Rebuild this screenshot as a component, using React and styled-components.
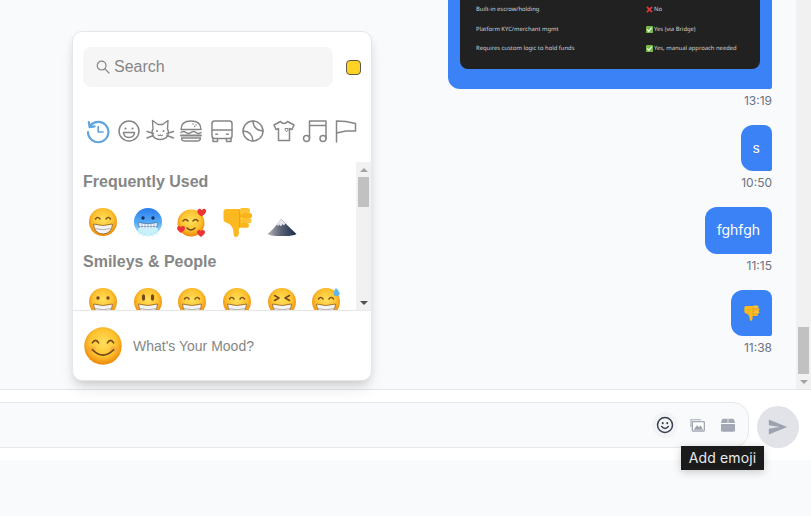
import React from "react";
import styled, { createGlobalStyle } from "styled-components";

const GlobalStyle = createGlobalStyle`
  html, body { margin: 0; padding: 0; height: 100%; }
  body {
    background: #f9fafb;
    font-family: Inter, "Liberation Sans", sans-serif;
    overflow: hidden;
  }
`;

const Page = styled.div`
  position: relative;
  width: 811px;
  height: 516px;
  overflow: hidden;
  display: flex;
  flex-direction: column;
`;

/* chat */
const ChatArea = styled.div`
  height: 389px;
  display: flex;
  flex-shrink: 0;
`;
const Messages = styled.div`
  flex: 1;
  min-width: 0;
  overflow: hidden;
  display: flex;
  flex-direction: column;
  justify-content: flex-end;
  align-items: flex-end;
  padding: 0 24px 33px 0;
`;
const Message = styled.div`
  display: flex;
  flex-direction: column;
  align-items: flex-end;
  flex-shrink: 0;
  margin-top: 16px;
`;
const Bubble = styled.div`
  background: #3b82f6;
  color: #fff;
  font-size: 14px;
  line-height: 22.75px;
  padding: 12px;
  border-radius: 12px 8px 2px 12px;
  display: flex;
  align-items: center;
  justify-content: center;
`;
const Time = styled.div`
  margin-top: 4px;
  font-size: 12px;
  line-height: 16px;
  color: #6b7280;
`;
const Shot = styled.div`
  width: 300px;
  background: #212121;
  border-radius: 0 0 8px 8px;
  padding: 0 16px 10px;
  margin-bottom: 8px;
  box-sizing: border-box;
  display: grid;
  grid-template-columns: 170px 1fr;
  grid-auto-rows: 19.6px;
  align-items: center;
  font-family: "Noto Sans", sans-serif;
  font-size: 5.85px;
  text-rendering: geometricPrecision;
  color: #d4d4d4;
  white-space: nowrap;
`;
const ShotValue = styled.span`
  display: flex;
  align-items: center;
  gap: 1px;
`;

const Scrollbar = styled.div`
  width: 15px;
  flex-shrink: 0;
  background: #f1f1f1;
  display: flex;
  flex-direction: column;
  align-items: center;
`;
const ArrowSlot = styled.div`
  height: 15px;
  flex-shrink: 0;
  display: flex;
  align-items: center;
  justify-content: center;
`;
const Arrow = styled.div`
  width: 0;
  height: 0;
  border-left: 4px solid transparent;
  border-right: 4px solid transparent;
  ${(p) => (p.$up ? "border-bottom" : "border-top")}: 4px solid ${(p) => p.$color};
`;
const Thumb = styled.div`
  width: 11px;
  height: ${(p) => p.$height}px;
  background: #c1c1c1;
  flex-shrink: 0;
`;
const Spacer = styled.div`
  flex: 1;
`;

/* composer */
const Composer = styled.div`
  height: 71px;
  flex-shrink: 0;
  box-sizing: border-box;
  background: #fff;
  border-top: 1px solid #e5e7eb;
  display: flex;
  align-items: center;
  gap: 8px;
  padding: 0 12px 0 0;
`;
const InputBox = styled.div`
  flex: 1;
  height: 46px;
  margin-left: -24px;
  box-sizing: border-box;
  background: #f9fafb;
  border: 1px solid #e5e7eb;
  border-radius: 16px;
  display: flex;
  align-items: center;
  justify-content: flex-end;
  gap: 5.5px;
  padding-right: 7px;
`;
const ToolButton = styled.div`
  width: 26px;
  height: 26px;
  border-radius: 50%;
  background: ${(p) => (p.$active ? "#f3f4f6" : "transparent")};
  display: flex;
  align-items: center;
  justify-content: center;
`;
const SendButton = styled.div`
  width: 42px;
  height: 42px;
  margin-top: 4px;
  border-radius: 50%;
  background: #e1e3e8;
  display: flex;
  align-items: center;
  justify-content: center;
`;
const Tooltip = styled.div`
  position: absolute;
  left: 681px;
  top: 446px;
  width: 83px;
  height: 24px;
  background: #1b1b1b;
  color: #e8eaee;
  font-size: 14px;
  letter-spacing: 0.15px;
  line-height: 24px;
  text-align: center;
  box-shadow: 0 2px 8px rgba(0, 0, 0, 0.2);
`;

/* emoji picker */
const Picker = styled.div`
  position: absolute;
  left: 72px;
  top: 31px;
  width: 300px;
  height: 350px;
  box-sizing: border-box;
  background: #fff;
  border: 1px solid #e7e7e7;
  border-radius: 10px;
  box-shadow: 0 10px 15px -3px rgba(0, 0, 0, 0.1), 0 4px 8px -2px rgba(0, 0, 0, 0.12);
  overflow: hidden;
  display: flex;
  flex-direction: column;
  font-family: "Liberation Sans", Arial, sans-serif;
`;
const SearchRow = styled.div`
  display: flex;
  align-items: center;
  padding: 15px 10px 0;
  gap: 13px;
`;
const SearchBox = styled.div`
  width: 250px;
  height: 40px;
  background: #f6f6f6;
  border-radius: 8px;
  display: flex;
  align-items: center;
  gap: 4px;
  padding-left: 13px;
  box-sizing: border-box;
  color: #868686;
  font-size: 16px;
`;
const SkinTone = styled.div`
  width: 15px;
  height: 15px;
  box-sizing: border-box;
  background: #ffd225;
  border: 1px solid #5f5a48;
  border-radius: 4px;
  margin-top: 1px;
`;
const Categories = styled.div`
  display: flex;
  padding: 32px 0 0 9.2px;
  height: 43px;
  flex-shrink: 0;
`;
const Category = styled.div`
  width: 31px;
  height: 24px;
  display: flex;
  align-items: center;
  justify-content: center;
  flex-shrink: 0;
`;
const PickerBody = styled.div`
  height: 148px;
  display: flex;
  flex-shrink: 0;
`;
const EmojiList = styled.div`
  flex: 1;
  min-width: 0;
  overflow: hidden;
  padding: 10px 0 0 8px;
`;
const SectionTitle = styled.div`
  font-size: 16px;
  font-weight: 700;
  line-height: 20px;
  color: #868686;
  padding-left: 2px;
`;
const EmojiRow = styled.div`
  display: flex;
  margin: 8px 0;
`;
const EmojiCell = styled.div`
  width: 44.6px;
  height: 44px;
  flex-shrink: 0;
  display: flex;
  align-items: center;
  justify-content: center;
`;
const PickerFooter = styled.div`
  flex: 1;
  border-top: 1px solid #e7e7e7;
  display: flex;
  align-items: center;
  gap: 10px;
  padding-left: 10px;
  font-size: 14px;
  color: #868686;
`;

const defs = (
  <svg width="0" height="0" style={{ position: "absolute" }}>
    <defs>
      <radialGradient id="faceFill" cx="50%" cy="42%" r="56%">
        <stop offset="0%" stopColor="#ffdf5c" />
        <stop offset="65%" stopColor="#fdc22f" />
        <stop offset="100%" stopColor="#ee8a0c" />
      </radialGradient>
      <linearGradient id="coldFill" x1="0" y1="0" x2="0" y2="1">
        <stop offset="0%" stopColor="#2a7bf0" />
        <stop offset="55%" stopColor="#57b0f5" />
        <stop offset="100%" stopColor="#c4f0fa" />
      </linearGradient>
      <linearGradient id="rockFill" x1="0" y1="0" x2="1" y2="0">
        <stop offset="0%" stopColor="#b5b6bb" />
        <stop offset="45%" stopColor="#5d6475" />
        <stop offset="100%" stopColor="#182947" />
      </linearGradient>
    </defs>
  </svg>
);

const Teeth = () => (
  <>
    <path d="M6.5 18Q16 21 25.5 18Q25 27.5 16 28Q7 27.5 6.5 18Z" fill="#f4f4f4" stroke="#8f6128" strokeWidth=".8" />
    <path d="M7.5 22.5Q16 25 24.5 22.5" fill="none" stroke="#a8a8a8" strokeWidth=".9" />
  </>
);
const ArcEyes = () => (
  <path d="M8.5 13Q10.7 9.8 13 13M19 13Q21.3 9.8 23.5 13" fill="none" stroke="#74481c" strokeWidth="1.4" strokeLinecap="round" />
);
const Head = () => <circle cx="16" cy="16" r="14" fill="url(#faceFill)" />;

const emojiArt = {
  beam: (
    <>
      <Head />
      <ArcEyes />
      <Teeth />
    </>
  ),
  cold: (
    <>
      <circle cx="16" cy="16" r="14" fill="url(#coldFill)" />
      <circle cx="11" cy="12" r="1.7" fill="#14305f" />
      <circle cx="21" cy="12" r="1.7" fill="#14305f" />
      <path d="M6.5 16.5Q16 19 25.5 16.5L24.5 24Q16 26.5 7.5 24Z" fill="#eef8fc" stroke="#47699a" strokeWidth=".7" />
      <path d="M10 17.5v7M13 18v7M16 18v7.5M19 18v7M22 17.5v7M7 20.5h18" fill="none" stroke="#6d8cb5" strokeWidth=".6" />
      <path d="M6 22l1 8 2-4 2 5 2-4 3 4 3-4 2 4 2-5 2 4 1-8Z" fill="#c9f1fb" />
    </>
  ),
  hearts: (
    <>
      <circle cx="15" cy="17" r="13.5" fill="url(#faceFill)" />
      <path d="M7 15Q9.5 12 12 15M17 15Q19.5 12 22 15" fill="none" stroke="#74481c" strokeWidth="1.4" strokeLinecap="round" />
      <path d="M11 22Q15 26 19 22" fill="none" stroke="#74481c" strokeWidth="1.4" strokeLinecap="round" />
      <path d="M25.5 10.5C21.5 8 20.5 5.5 22 3.5C23.5 2 25.2 3 25.8 4.2C26.5 3 28.2 2 29.7 3.5C31 5.5 29.5 8 25.5 10.5Z" fill="#ec3338" />
      <path d="M5 27C1.5 24.8 .3 22.5 1.5 20.8C2.9 19.4 4.3 20.2 5 21.3C5.7 20.2 7.2 19.4 8.6 20.8C9.8 22.5 8.4 24.8 5 27Z" fill="#ec3338" />
      <path d="M25 31C21.5 28.8 20.3 26.5 21.5 24.8C22.9 23.4 24.3 24.2 25 25.3C25.7 24.2 27.2 23.4 28.6 24.8C29.8 26.5 28.4 28.8 25 31Z" fill="#ec3338" />
    </>
  ),
  thumbsDown: (
    <>
      <path d="M2.5 6Q2.5 3 6 3H20V21L18 22.5Q17.5 25 18 27Q17.5 31 15 31Q12.5 31 12.5 27Q12.5 22 9.5 19Q7 17 4 16Q2.5 15.5 2.5 13Z" fill="#fbb81f" />
      <rect x="18.5" y="2" width="10.5" height="5.2" rx="2.5" fill="#fdc233" />
      <rect x="19.5" y="7" width="11.5" height="5.2" rx="2.5" fill="#f9b41c" />
      <rect x="19.5" y="12" width="11" height="5.2" rx="2.5" fill="#fdc233" />
      <rect x="18.5" y="17" width="9.5" height="4.8" rx="2.4" fill="#f9b41c" />
      <path d="M18.5 4V21" stroke="#df9310" strokeWidth=".5" fill="none" />
    </>
  ),
  mountain: (
    <>
      <path d="M1.5 28Q9 22 15 13Q23 21 30.5 28Q26 30.5 16 30Q6 30.5 1.5 28Z" fill="url(#rockFill)" />
      <path d="M11 18.5L15 13L19.5 17.5L18 19.5L16.6 18L15 20.5L13.5 18.5L12 20Z" fill="#e6e7ec" />
    </>
  ),
  grinning: (
    <>
      <Head />
      <circle cx="11" cy="12" r="1.7" fill="#74481c" />
      <circle cx="21" cy="12" r="1.7" fill="#74481c" />
      <Teeth />
    </>
  ),
  smiley: (
    <>
      <Head />
      <ellipse cx="11.5" cy="11.5" rx="1.6" ry="3.2" fill="#74481c" />
      <ellipse cx="20.5" cy="11.5" rx="1.6" ry="3.2" fill="#74481c" />
      <Teeth />
    </>
  ),
  squint: (
    <>
      <Head />
      <path d="M8.5 9.5L13 12L8.5 14.5M23.5 9.5L19 12L23.5 14.5" fill="none" stroke="#74481c" strokeWidth="1.5" strokeLinecap="round" strokeLinejoin="round" />
      <Teeth />
    </>
  ),
  sweat: (
    <>
      <Head />
      <ArcEyes />
      <Teeth />
      <path d="M26 2Q22.5 7 24.5 9.5Q27 11 29.5 9Q30.5 6.5 26 2Z" fill="#5cb6f2" />
    </>
  ),
  smiling: (
    <>
      <circle cx="16" cy="16" r="15" fill="url(#faceFill)" />
      <ellipse cx="7" cy="18.5" rx="3.4" ry="2.2" fill="#f6a43c" opacity=".6" />
      <ellipse cx="25" cy="18.5" rx="3.4" ry="2.2" fill="#f6a43c" opacity=".6" />
      <path d="M7.5 13.5Q10 9.5 12.5 13.5M19.5 13.5Q22 9.5 24.5 13.5" fill="none" stroke="#74481c" strokeWidth="1.3" strokeLinecap="round" />
      <path d="M7.5 19Q16 27.5 24.5 19" fill="none" stroke="#74481c" strokeWidth="1.4" strokeLinecap="round" />
    </>
  ),
};

const Emoji = ({ name, size = 32 }) => (
  <svg width={size} height={size} viewBox="0 0 32 32">
    {emojiArt[name]}
  </svg>
);

const stroke = { fill: "none", stroke: "#868686", strokeWidth: 1.5, strokeLinecap: "round", strokeLinejoin: "round" };

const categoryIcons = [
  <g key="recent" {...stroke} stroke="#5fa6e0" strokeWidth="2.2">
    <path d="M4.6 6.2A10.2 10.2 0 1 1 2 13" />
    <path d="M2.8 3.2L3.6 8.2L8.6 7.4" />
    <path d="M12.2 7.5V13H17" strokeWidth="1.7" />
  </g>,
  <g key="smile" {...stroke}>
    <circle cx="12" cy="12" r="10" />
    <circle cx="8.5" cy="9.5" r="1.1" fill="#868686" stroke="none" />
    <circle cx="15.5" cy="9.5" r="1.1" fill="#868686" stroke="none" />
    <path d="M6.5 13.5H17.5Q17 18.5 12 18.5Q7 18.5 6.5 13.5Z" />
  </g>,
  <g key="cat" {...stroke} strokeWidth="1.4">
    <path d="M5 10L4.5 1.5L10 5.5H14.5L20 1.5L19.5 10Q21.5 13 19.5 17Q17 20.5 12.2 20.5Q7.5 20.5 5 17Q3 13 5 10Z" />
    <path d="M-1 12.5L5.5 14.5M-1 19L5.5 16.5M25.5 12.5L19 14.5M25.5 19L19 16.5" />
    <circle cx="9" cy="12" r="1" fill="#868686" stroke="none" />
    <circle cx="15.5" cy="12" r="1" fill="#868686" stroke="none" />
    <path d="M10 16Q11 17.5 12.2 15.8Q13.5 17.5 14.5 16" strokeWidth="1.1" />
  </g>,
  <g key="burger" {...stroke} strokeWidth="1.4">
    <path d="M2 10.5Q2 2 12 2Q22 2 22 10.5Z" />
    <path d="M2 13.5Q4.5 11.5 7 13.5T12 13.5T17 13.5T22 13.5" />
    <path d="M2 16.5H22" strokeWidth="2" />
    <path d="M2.5 19H21.5Q21.5 22 18 22H6Q2.5 22 2.5 19Z" />
    <path d="M14 5h.1M17 6h.1M15.5 7.5h.1" />
  </g>,
  <g key="bus" {...stroke}>
    <rect x="2" y="2" width="20" height="17.5" rx="2.5" />
    <path d="M2 11H22M3 19.5V22.5H7.5V19.5M16.5 19.5V22.5H21V19.5M5.8 15.3H7.5M16.5 15.3H18.2" />
  </g>,
  <g key="ball" {...stroke}>
    <circle cx="12" cy="12" r="10" />
    <path d="M12 2Q12.5 11.5 22 12M2 12Q11.5 12.5 12 22" />
  </g>,
  <g key="shirt" {...stroke}>
    <path d="M8.5 2.5L2 6L4 10.5L6.5 9.5V21.5H17.5V9.5L20 10.5L22 6L15.5 2.5Q12 6.5 8.5 2.5Z" />
    <path d="M13.5 9.5H16V11.5L14.7 12.5L13.5 11.5Z" strokeWidth="1" />
  </g>,
  <g key="music" {...stroke}>
    <circle cx="3.5" cy="19.5" r="3" />
    <circle cx="20" cy="19.5" r="3" />
    <path d="M6.5 19.5V2H23V19.5M6.5 6.5H23" />
  </g>,
  <g key="flag" {...stroke}>
    <path d="M2.5 23V2L12 2.5L21.5 4.5V12L12 12L2.5 14" />
  </g>,
];

const CrossMark = () => (
  <svg width="7" height="7" viewBox="0 0 8 8">
    <path d="M1 1L7 7M7 1L1 7" stroke="#e0383a" strokeWidth="2" />
  </svg>
);
const CheckMark = () => (
  <svg width="7" height="7" viewBox="0 0 8 8">
    <rect width="8" height="8" rx="1" fill="#76b947" />
    <path d="M1.5 4L3.3 6L6.5 2" fill="none" stroke="#fff" strokeWidth="1.3" />
  </svg>
);

const frequent = ["beam", "cold", "hearts", "thumbsDown", "mountain"];
const smileys = ["grinning", "smiley", "beam", "beam", "squint", "sweat"];

const shotRows = [
  ["Built-in escrow/holding", <CrossMark />, "No"],
  ["Platform KYC/merchant mgmt", <CheckMark />, "Yes (via Bridge)"],
  ["Requires custom logic to hold funds", <CheckMark />, "Yes, manual approach needed"],
];

export default function App() {
  return (
    <Page>
      <GlobalStyle />
      {defs}
      <ChatArea>
        <Messages>
          <Message>
            <Bubble>
              <Shot>
                {shotRows.map(([label, mark, value]) => (
                  <React.Fragment key={label}>
                    <span>{label}</span>
                    <ShotValue>
                      {mark}
                      {value}
                    </ShotValue>
                  </React.Fragment>
                ))}
              </Shot>
            </Bubble>
            <Time>13:19</Time>
          </Message>
          <Message>
            <Bubble>s</Bubble>
            <Time>10:50</Time>
          </Message>
          <Message>
            <Bubble>fghfgh</Bubble>
            <Time>11:15</Time>
          </Message>
          <Message>
            <Bubble>
              <svg width="17" height="22" viewBox="0 0 32 32" style={{ display: "block" }}>
                {emojiArt.thumbsDown}
              </svg>
            </Bubble>
            <Time>11:38</Time>
          </Message>
        </Messages>
        <Scrollbar>
          <Spacer />
          <Thumb $height={47} />
          <ArrowSlot>
            <Arrow $color="#a3a3a3" />
          </ArrowSlot>
        </Scrollbar>
      </ChatArea>

      <Composer>
        <InputBox>
          <ToolButton $active>
            <svg width="18" height="18" viewBox="0 0 24 24" fill="none" stroke="#374151" strokeWidth="2" strokeLinecap="round">
              <circle cx="12" cy="12" r="10" />
              <path d="M7.5 14Q12 19 16.5 14" />
              <path d="M9 9.2v.6M15 9.2v.6" strokeWidth="2.6" />
            </svg>
          </ToolButton>
          <ToolButton>
            <svg width="16" height="16" viewBox="0 0 24 24">
              <path d="M2 3H18V5H4V15H2Z" fill="#b6bbc4" />
              <rect x="5" y="7" width="18" height="14" rx="1" fill="#fff" stroke="#a3a9b4" strokeWidth="2" />
              <path d="M7 19L12 12.5L15 15.5L17.5 12.5L21 19Z" fill="#9ca3af" />
            </svg>
          </ToolButton>
          <ToolButton>
            <svg width="16" height="16" viewBox="0 0 24 24" fill="#a3a9b4">
              <path d="M5 2.5H11.5V9H1.5L2.5 5Q3 2.5 5 2.5Z" />
              <path d="M12.5 2.5H19Q21 2.5 21.5 5L22.5 9H12.5Z" />
              <path d="M1.5 10.5H22.5V20Q22.5 22 20.5 22H3.5Q1.5 22 1.5 20Z" />
            </svg>
          </ToolButton>
        </InputBox>
        <SendButton>
          <svg width="20" height="20" viewBox="0 0 24 24" fill="#9ca3af">
            <path d="M1 3L23 12L1 21L1 14L14 12L1 10Z" />
          </svg>
        </SendButton>
      </Composer>

      <Tooltip>Add emoji</Tooltip>

      <Picker>
        <SearchRow>
          <SearchBox>
            <svg width="14" height="14" viewBox="0 0 14 14" fill="none" stroke="#868686" strokeWidth="1.2" strokeLinecap="round">
              <circle cx="5.6" cy="5.6" r="4.4" />
              <path d="M8.9 8.9L13 13" />
            </svg>
            Search
          </SearchBox>
          <SkinTone />
        </SearchRow>
        <Categories>
          {categoryIcons.map((icon) => (
            <Category key={icon.key}>
              <svg width="24" height="24" viewBox="0 0 24 24" style={{ overflow: "visible" }}>
                {icon}
              </svg>
            </Category>
          ))}
        </Categories>
        <PickerBody>
          <EmojiList>
            <SectionTitle>Frequently Used</SectionTitle>
            <EmojiRow>
              {frequent.map((name) => (
                <EmojiCell key={name}>
                  <Emoji name={name} />
                </EmojiCell>
              ))}
            </EmojiRow>
            <SectionTitle>Smileys &amp; People</SectionTitle>
            <EmojiRow>
              {smileys.map((name, i) => (
                <EmojiCell key={i}>
                  <Emoji name={name} />
                </EmojiCell>
              ))}
            </EmojiRow>
          </EmojiList>
          <Scrollbar>
            <ArrowSlot>
              <Arrow $up $color="#a3a3a3" />
            </ArrowSlot>
            <Thumb $height={30} />
            <Spacer />
            <ArrowSlot>
              <Arrow $color="#505050" />
            </ArrowSlot>
          </Scrollbar>
        </PickerBody>
        <PickerFooter>
          <Emoji name="smiling" size={40} />
          What's Your Mood?
        </PickerFooter>
      </Picker>
    </Page>
  );
}
